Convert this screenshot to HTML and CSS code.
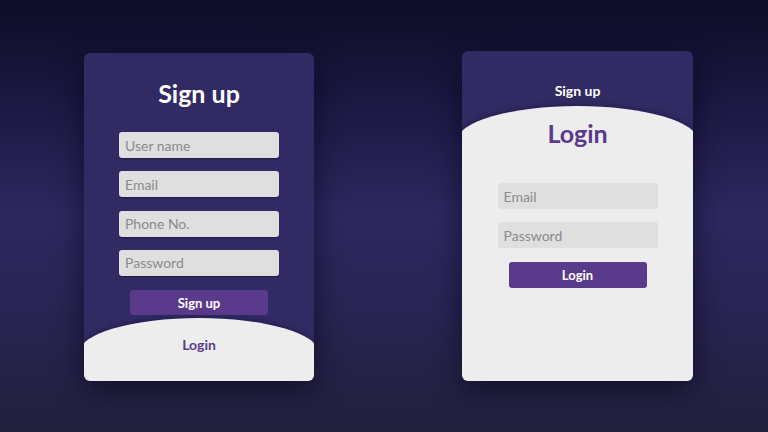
FILE: index.html
```html
<!DOCTYPE html>
<html lang="en">
<head>
    <meta charset="UTF-8">
    <meta name="viewport" content="width=device-width, initial-scale=1.0">
    <title>Sign up / Login</title>
    <link rel="stylesheet" href="styles.css">
</head>
<body>
    <div class="stage">
        <!-- signup open, login tucked at the bottom -->
        <div class="card card-signup">
            <h1 class="title">Sign up</h1>
            <form class="fields">
                <input type="text" placeholder="User name">
                <input type="email" placeholder="Email">
                <input type="text" placeholder="Phone No.">
                <input type="password" placeholder="Password">
                <button type="button" class="btn">Sign up</button>
            </form>
            <div class="panel panel-low">
                <span class="panel-label">Login</span>
            </div>
        </div>

        <!-- login open, signup pushed up -->
        <div class="card card-login">
            <span class="top-label">Sign up</span>
            <div class="panel panel-high">
                <h1 class="title title-dark">Login</h1>
                <form class="fields fields-login">
                    <input type="email" placeholder="Email">
                    <input type="password" placeholder="Password">
                    <button type="button" class="btn">Login</button>
                </form>
            </div>
        </div>
    </div>
</body>
</html>
```

FILE: styles.css
```css
* {
    margin: 0;
    padding: 0;
    box-sizing: border-box;
    font-family: Lato, "Noto Sans", sans-serif;
}

html, body {
    width: 100%;
    height: 100%;
}

body {
    background: linear-gradient(180deg, #0f0d27 0%, #1a1741 22%, #2d285f 50%, #282453 72%, #22203d 100%);
    overflow: hidden;
}

.stage {
    height: 100%;
    display: flex;
    justify-content: center;
    align-items: center;
    gap: 148px;
    padding-left: 9px;
}

.card {
    display: flex;
    flex-direction: column;
    align-items: center;
    background: #312a63;
    border-radius: 6px;
    overflow: hidden;
    box-shadow: 0 8px 28px rgba(5, 3, 20, 0.6);
}

.card-signup {
    width: 230px;
    height: 328px;
    padding-top: 26px;
    margin-top: 2px;
}

.card-login {
    width: 231px;
    height: 330px;
    padding-top: 31px;
}

.title {
    font-size: 25px;
    line-height: 29px;
    font-weight: 700;
    color: #fff;
    text-align: center;
}

.title-dark {
    color: #5a3a8b;
}

.fields {
    display: flex;
    flex-direction: column;
    align-items: center;
    gap: 13.3px;
    margin-top: 24px;
}

.fields-login {
    margin-top: 35px;
    gap: 13px;
}

input {
    width: 160px;
    height: 26px;
    padding: 0 6px;
    border: none;
    outline: none;
    border-radius: 3px;
    background: #e0dfe0;
    font-size: 14px;
    color: #333;
}

.card-signup input {
    box-shadow: 0 1px 1px rgba(0, 0, 0, 0.35);
}

input::placeholder {
    color: #8b8a8c;
}

.btn {
    width: 138px;
    height: 25px;
    margin-top: 1px;
    border: none;
    border-radius: 3px;
    background: #5a3a8b;
    color: #fff;
    font-size: 13px;
    font-weight: 700;
    cursor: pointer;
}

.fields-login .btn {
    height: 26px;
}

.panel {
    flex-shrink: 0;
    width: 104%;
    height: 320px;
    display: flex;
    flex-direction: column;
    align-items: center;
    background: #ededed;
    border-radius: 50% 50% 0 0 / 35px 35px 0 0;
    box-shadow: 0 -1px 5px rgba(10, 5, 40, 0.35);
}

.panel-low {
    margin-top: 3px;
    padding-top: 18px;
}

.panel-label {
    font-size: 14px;
    line-height: 18px;
    font-weight: 700;
    color: #5a3a8b;
}

.top-label {
    font-size: 14px;
    line-height: 18px;
    font-weight: 700;
    color: #fff;
}

.panel-high {
    margin-top: 6px;
    padding-top: 13px;
}
```
